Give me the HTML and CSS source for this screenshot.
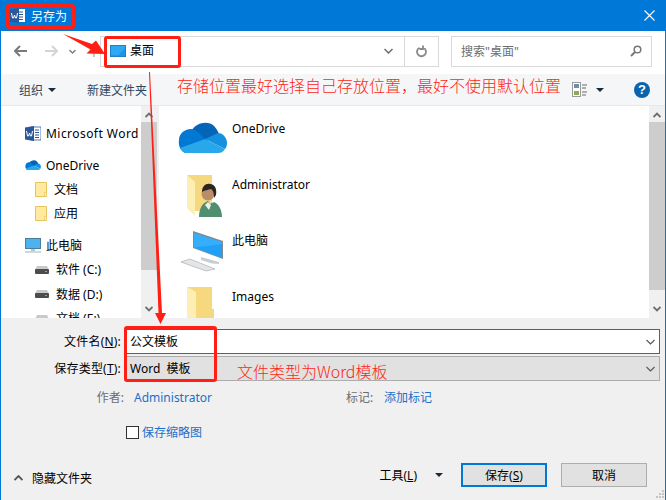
FILE: index.html
```html
<!DOCTYPE html>
<html lang="zh-CN">
<head>
    <meta charset="UTF-8">
    <title>另存为</title>
    <link rel="stylesheet" href="styles.css">
</head>
<body>
<div class="window">
    <div class="titlebar">
        <svg class="title-icon" width="16" height="15" viewBox="0 0 16 15">
            <rect x="6" y="1" width="9" height="13" fill="#fff"/>
            <path d="M9 4h4M9 6.500h4M9 9h4M9 11.500h4" stroke="#2b579a" stroke-width="1"/>
            <path d="M0 1.500 9 0v15l-9-1.500z" fill="#2b579a"/>
            <path d="M1.500 5l1 5h1l1-3 1 3h1l1-5" fill="none" stroke="#fff" stroke-width="1"/>
        </svg>
        <span class="title-text">另存为</span>
        <svg class="title-close" width="11" height="11" viewBox="0 0 11 11"><path d="M.5.500l10 10M10.500.500l-10 10" stroke="#fff" stroke-width="1.100"/></svg>
    </div>

    <div class="navbar">
        <svg class="nav-btn" width="14" height="12" viewBox="0 0 14 12"><path d="M6 1 1 6l5 5M1 6h12" fill="none" stroke="#7a7a7a" stroke-width="2"/></svg>
        <svg class="nav-btn nav-forward" width="14" height="12" viewBox="0 0 14 12"><path d="M8 1l5 5-5 5M13 6H1" fill="none" stroke="#d4d4d4" stroke-width="2"/></svg>
        <svg class="nav-btn nav-down" width="7" height="5" viewBox="0 0 7 5"><path d="M.5 1l3 3 3-3" fill="none" stroke="#7a7a7a" stroke-width="1.300"/></svg>
        <svg class="nav-btn nav-up" width="10" height="12" viewBox="0 0 10 12"><path d="M1 5l4-4 4 4M5 1v11" fill="none" stroke="#c4c4c4" stroke-width="2"/></svg>
        <div class="address">
            <svg class="address-icon" width="16" height="12" viewBox="0 0 16 12">
                <rect width="16" height="12" fill="#1f7fc4"/>
                <rect x="1" y="1" width="14" height="9.500" fill="#2ea7f5"/>
                <path d="M8 10.500 15 3v7.500z" fill="#1a95ea"/>
            </svg>
            <span class="address-text">桌面</span>
            <svg class="address-chevron" width="9" height="6" viewBox="0 0 9 6"><path d="M.5 1 4.500 5l4-4" fill="none" stroke="#6d6d6d" stroke-width="1.500"/></svg>
            <div class="address-refresh">
                <svg width="12" height="13" viewBox="0 0 12 13"><path d="M7 2.500a4.500 4.500 0 1 1-3.500.2M7 .500v3.500H3.500" fill="none" stroke="#8a8a8a" stroke-width="1.800"/></svg>
            </div>
        </div>
        <div class="search">
            <span>搜索"桌面"</span>
            <svg width="12" height="12" viewBox="0 0 12 12"><circle cx="7.500" cy="4.500" r="3.300" fill="none" stroke="#777" stroke-width="1.500"/><path d="M5 7 1 11" stroke="#777" stroke-width="2"/></svg>
        </div>
    </div>

    <div class="toolbar">
        <span class="tool-item">组织</span>
        <span class="caret tool-caret"></span>
        <span class="tool-item tool-new">新建文件夹</span>
        <svg class="view-icon" width="15" height="15" viewBox="0 0 15 15">
            <rect x=".5" y=".5" width="8" height="14" fill="#fff" stroke="#9a9a9a"/>
            <rect x="2" y="2" width="5" height="4" fill="#6f8fa8"/>
            <rect x="2" y="9" width="5" height="4" fill="#8fa85a"/>
            <path d="M10 3h5M10 6h4M10 10h5M10 13h4" stroke="#666"/>
        </svg>
        <span class="caret view-caret"></span>
        <span class="help">?</span>
    </div>

    <div class="browser">
        <div class="tree">
            <div class="tree-row">
                <svg width="16" height="15" viewBox="0 0 16 15">
                    <rect x="6" y="1" width="10" height="13" fill="#fff" stroke="#2b579a" stroke-width=".8"/>
                    <path d="M10 4h4M10 6.500h4M10 9h4M10 11.500h4" stroke="#2b579a"/>
                    <path d="M0 1.500 9 0v15l-9-1.500z" fill="#2b579a"/>
                    <path d="M1.500 5l1 5h1l1-3 1 3h1l1-5" fill="none" stroke="#fff"/>
                </svg>
                <span class="tree-word">Microsoft Word</span>
            </div>
            <div class="tree-group">
                <div class="tree-row">
                    <svg width="16" height="10" viewBox="0 0 49 31">
                        <path d="M14 8C18 1 30-2 36 4c2 2 4 5 5 8L27 20 13 10z" fill="#0364b8"/>
                        <path d="M1 18C1 12 6 7 13 7c3 0 6 2 8 4l6 6L8 31C3 30 0 24 1 18z" fill="#0078d4"/>
                        <path d="M40 11c5 0 9 5 9 10 0 3-1 5-2 6L27 17z" fill="#1490df"/>
                        <path d="M27 17l20 10c-2 3-4 4-7 4H9c-3 0-5-2-7-5z" fill="#28a8ea"/>
                    </svg>
                    <span>OneDrive</span>
                </div>
                <div class="tree-row tree-sub">
                    <svg width="12" height="15" viewBox="0 0 12 15"><path d="M.5.500h11v14H.5z" fill="#ffeaa0" stroke="#e6c35c"/><path d="M9.500 10.500h2v4h-2z" fill="#fff3c4" stroke="#e6c35c" stroke-width=".7"/></svg>
                    <span>文档</span>
                </div>
                <div class="tree-row tree-sub">
                    <svg width="12" height="15" viewBox="0 0 12 15"><path d="M.5.500h11v14H.5z" fill="#ffeaa0" stroke="#e6c35c"/><path d="M9.500 10.500h2v4h-2z" fill="#fff3c4" stroke="#e6c35c" stroke-width=".7"/></svg>
                    <span>应用</span>
                </div>
            </div>
            <div class="tree-group">
                <div class="tree-row">
                    <svg width="16" height="15" viewBox="0 0 16 15">
                        <rect x=".5" y=".5" width="15" height="10" fill="#4db2ee" stroke="#4a7d9e"/>
                        <path d="M6 11h4v2H6z" fill="#b5c7d3"/>
                        <path d="M0 14h16" stroke="#b9ccd8" stroke-width="1.500"/>
                    </svg>
                    <span>此电脑</span>
                </div>
                <div class="tree-row tree-sub tree-drive">
                    <svg width="14" height="9" viewBox="0 0 14 9"><path d="M2 1h10l2 4H0z" fill="#c9c9c9"/><rect y="4" width="14" height="5" rx="1" fill="#4d4d4d"/><rect x="10" y="6" width="2" height="1" fill="#4fd34f"/></svg>
                    <span>软件 (C:)</span>
                </div>
                <div class="tree-row tree-sub tree-drive">
                    <svg width="14" height="9" viewBox="0 0 14 9"><path d="M2 1h10l2 4H0z" fill="#c9c9c9"/><rect y="4" width="14" height="5" rx="1" fill="#4d4d4d"/><rect x="10" y="6" width="2" height="1" fill="#4fd34f"/></svg>
                    <span>数据 (D:)</span>
                </div>
                <div class="tree-row tree-sub tree-drive">
                    <svg width="14" height="9" viewBox="0 0 14 9"><path d="M2 1h10l2 4H0z" fill="#c9c9c9"/><rect y="4" width="14" height="5" rx="1" fill="#4d4d4d"/><rect x="10" y="6" width="2" height="1" fill="#4fd34f"/></svg>
                    <span>文档 (E:)</span>
                </div>
            </div>
        </div>
        <div class="scrollbar tree-scroll">
            <svg width="8" height="6" viewBox="0 0 8 6"><path d="M.5 5 4 1.500 7.500 5" fill="none" stroke="#6d6d6d" stroke-width="1.800"/></svg>
            <div class="thumb"></div>
            <svg width="8" height="6" viewBox="0 0 8 6"><path d="M.5 1 4 4.500 7.500 1" fill="none" stroke="#6d6d6d" stroke-width="1.800"/></svg>
        </div>
        <div class="files">
            <div class="file-row">
                <svg class="file-icon file-cloud" width="49" height="31" viewBox="0 0 49 31">
                    <path d="M14 8C18 1 30-2 36 4c2 2 4 5 5 8L27 20 13 10z" fill="#0364b8"/>
                    <path d="M1 18C1 12 6 7 13 7c3 0 6 2 8 4l6 6L8 31C3 30 0 24 1 18z" fill="#0078d4"/>
                    <path d="M40 11c5 0 9 5 9 10 0 3-1 5-2 6L27 17z" fill="#1490df"/>
                    <path d="M27 17l20 10c-2 3-4 4-7 4H9c-3 0-5-2-7-5z" fill="#28a8ea"/>
                </svg>
                <span>OneDrive</span>
            </div>
            <div class="file-row">
                <svg class="file-icon" width="48" height="42" viewBox="0 0 48 42">
                    <path d="M8 0h25v36H16z" fill="#f6d87e"/>
                    <path d="M8 0l8 7v34l-8-8z" fill="#fdeeb3"/>
                    <path d="M20 42c0-8 3-14 9-16l2 3 4-2c5 2 8 8 8 15z" fill="#4f8f70"/>
                    <path d="M26 30l3-3 3 3-2 5z" fill="#eee"/>
                    <circle cx="29" cy="19" r="6.500" fill="#b98d68"/>
                    <path d="M23 17c0-6 4-9 8-8 5 0 7 5 6 11l-2 3c0-5-1-8-3-9-3 1-6 1-9 3z" fill="#2c2620"/>
                </svg>
                <span>Administrator</span>
            </div>
            <div class="file-row">
                <svg class="file-icon" width="48" height="42" viewBox="0 0 48 42">
                    <path d="M14 0 44 10V28L14 17z" fill="#7d8a94"/>
                    <path d="M15 2 43 11V27L15 16.500z" fill="#35aefc"/>
                    <path d="M15 16.500 43 13V27z" fill="#22a0f5"/>
                    <path d="M22 26 40 31v2l-7-.5L22 29z" fill="#c5ced4"/>
                    <path d="M2 31 11 28 36 38 27 40z" fill="#e3e6e8" stroke="#b5babd" stroke-width=".8"/>
                </svg>
                <span>此电脑</span>
            </div>
            <div class="file-row">
                <svg class="file-icon" width="48" height="42" viewBox="0 0 48 42">
                    <path d="M8 0h25v22h2v20H8z" fill="#f6d87e"/>
                    <path d="M8 0l9 5v37l-9-5z" fill="#fdeeb3"/>
                </svg>
                <span>Images</span>
            </div>
        </div>
        <div class="scrollbar files-scroll">
            <svg width="8" height="6" viewBox="0 0 8 6"><path d="M.5 5 4 1.500 7.500 5" fill="none" stroke="#6d6d6d" stroke-width="1.800"/></svg>
            <div class="thumb"></div>
            <svg width="8" height="6" viewBox="0 0 8 6"><path d="M.5 1 4 4.500 7.500 1" fill="none" stroke="#6d6d6d" stroke-width="1.800"/></svg>
        </div>
    </div>

    <div class="panel">
        <div class="field">
            <label class="field-label">文件名(<u>N</u>):</label>
            <div class="combo combo-name">
                <span>公文模板</span>
                <svg width="9" height="6" viewBox="0 0 9 6"><path d="M.5 1 4.500 5l4-4" fill="none" stroke="#555" stroke-width="1.100"/></svg>
            </div>
        </div>
        <div class="field">
            <label class="field-label">保存类型(<u>T</u>):</label>
            <div class="combo combo-type">
                <span>Word 模板</span>
                <svg width="9" height="6" viewBox="0 0 9 6"><path d="M.5 1 4.500 5l4-4" fill="none" stroke="#555" stroke-width="1.100"/></svg>
            </div>
        </div>
        <div class="meta">
            <span class="meta-label">作者:</span>
            <span class="meta-link meta-author">Administrator</span>
            <span class="meta-name">标记:</span>
            <span class="meta-link">添加标记</span>
        </div>
        <div class="thumb-option">
            <span class="checkbox"></span>
            <span class="meta-link">保存缩略图</span>
        </div>
        <div class="footer">
            <svg class="hide-icon" width="9" height="6" viewBox="0 0 9 6"><path d="M.5 5 4.500 1l4 4" fill="none" stroke="#555" stroke-width="1.800"/></svg>
            <span class="hide-text">隐藏文件夹</span>
            <span class="tools">工具(<u>L</u>)</span>
            <span class="caret tools-caret"></span>
            <button class="btn btn-save">保存(<u>S</u>)</button>
            <button class="btn">取消</button>
        </div>
    </div>

    <!-- 截图上的红色标注 -->
    <svg class="arrows" width="666" height="500" viewBox="0 0 666 500">
        <path d="M63 34 92 44 96 40.500 105 54 86.500 53.500 90.500 49.500z" fill="#ff1f14"/>
        <path d="M149 72h1L162 313h4l-5.500 11L155 313h3.500z" fill="#ff1f14"/>
    </svg>
    <div class="mark mark-title"></div>
    <div class="mark mark-address"></div>
    <div class="mark mark-fields"></div>
    <div class="note note-location">存储位置最好选择自己存放位置&#xFF0C;最好不使用默认位置</div>
    <div class="note note-type">文件类型为Word模板</div>

    <svg class="grip" width="9" height="9" viewBox="0 0 9 9">
        <path d="M6 0h2v2H6zM3 3h2v2H3zM6 3h2v2H6zM0 6h2v2H0zM3 6h2v2H3zM6 6h2v2H6z" fill="#c4c4c4"/>
    </svg>
</div>
</body>
</html>
```

FILE: styles.css
```css
body {
    margin: 0;
    font-family: "Noto Sans", "Noto Sans CJK SC", sans-serif;
    font-size: 12px;
    color: #000;
}

.window {
    position: relative;
    width: 666px;
    height: 500px;
    box-sizing: border-box;
    display: flex;
    flex-direction: column;
    overflow: hidden;
    border-left: 1px solid #0078d7;
    border-right: 1px solid #0078d7;
    background-color: #f0f0f0;
}

/* 标题栏 */
.titlebar {
    height: 31px;
    flex-shrink: 0;
    display: flex;
    align-items: center;
    padding: 0 9px;
    background-color: #0078d7;
    color: #fff;
}

.title-icon {
    margin-right: 5px;
}

.title-close {
    margin-left: auto;
    margin-right: 1px;
}

/* 地址栏 */
.navbar {
    height: 43px;
    flex-shrink: 0;
    box-sizing: border-box;
    display: flex;
    align-items: center;
    padding-left: 13px;
    padding-right: 13px;
    padding-bottom: 3px;
    background-color: #fff;
}

.nav-forward {
    margin-left: 16px;
}

.nav-down {
    margin-left: 11px;
}

.nav-up {
    margin-left: 13px;
}

.address {
    width: 339px;
    height: 31px;
    box-sizing: border-box;
    margin-left: 1px;
    display: flex;
    align-items: center;
    padding-left: 9px;
    border: 1px solid #d9d9d9;
    color: #000;
}

.address-icon {
    margin-right: 4px;
}

.address-text {
    margin-top: -2px;
}

.address-chevron {
    margin-left: auto;
    margin-right: 11px;
}

.address-refresh {
    width: 33px;
    height: 100%;
    display: flex;
    align-items: center;
    justify-content: center;
    border-left: 1px solid #d9d9d9;
}

.search {
    width: 201px;
    height: 31px;
    box-sizing: border-box;
    margin-left: 12px;
    display: flex;
    align-items: center;
    justify-content: space-between;
    padding: 0 9px;
    border: 1px solid #d9d9d9;
    color: #6d6d6d;
}

/* 工具栏 */
.toolbar {
    height: 32px;
    flex-shrink: 0;
    box-sizing: border-box;
    display: flex;
    align-items: center;
    padding-left: 18px;
    border-bottom: 1px solid #e8e8e8;
    background-color: #f5f6f7;
    color: #33475b;
}

.caret {
    width: 0;
    height: 0;
    border-left: 4px solid transparent;
    border-right: 4px solid transparent;
    border-top: 4px solid #1c2b3a;
}

.tool-caret {
    margin-left: 5px;
}

.tool-new {
    margin-left: 31px;
}

.view-icon {
    margin-left: 425px;
}

.view-caret {
    margin-left: 9px;
}

.help {
    width: 16px;
    height: 16px;
    margin-left: 30px;
    border-radius: 50%;
    background-color: #0d62ae;
    color: #fff;
    font-family: "Liberation Sans", sans-serif;
    font-size: 13px;
    font-weight: bold;
    line-height: 16px;
    text-align: center;
}

/* 文件浏览区 */
.browser {
    height: 212px;
    flex-shrink: 0;
    display: flex;
    background-color: #f0f0f0;
}

.tree {
    width: 140px;
    flex-shrink: 0;
    box-sizing: border-box;
    padding-top: 15px;
    overflow: hidden;
    background-color: #fff;
}

.tree-group {
    margin-top: 8px;
}

.tree-row {
    height: 24px;
    display: flex;
    align-items: center;
    gap: 5px;
    padding-left: 24px;
    white-space: nowrap;
}

.tree-word {
    letter-spacing: .45px;
}

.tree-sub {
    padding-left: 34px;
    gap: 7px;
}

.tree-drive {
    height: 24.500px;
}

.scrollbar {
    width: 16px;
    flex-shrink: 0;
    display: flex;
    flex-direction: column;
    align-items: center;
    justify-content: space-between;
    padding: 6px 0;
    box-sizing: border-box;
    background-color: #f0f0f0;
}

.thumb {
    width: 16px;
    background-color: #cdcdcd;
}

.tree-scroll .thumb {
    height: 148px;
    margin-bottom: 32px;
}

.files-scroll .thumb {
    height: 168px;
    margin-bottom: 12px;
}

.files {
    flex: 1;
    margin-left: 2px;
    padding-top: 7px;
    overflow: hidden;
    background-color: #fff;
}

.file-row {
    height: 56px;
    display: flex;
    align-items: flex-start;
    padding-left: 20px;
    color: #000;
}

.file-row span {
    margin-left: 5px;
    line-height: 32px;
}

.file-icon {
    margin-top: 6px;
}

.file-cloud {
    margin-top: 9px;
    margin-left: -1px;
}

/* 底部表单 */
.panel {
    flex: 1;
    display: flex;
    flex-direction: column;
    padding-top: 11px;
    background-color: #f0f0f0;
}

.field {
    display: flex;
    align-items: center;
    height: 25px;
    margin-bottom: 2px;
}

.field-label {
    width: 120px;
    margin-right: 5px;
    margin-top: -2px;
    text-align: right;
    letter-spacing: .2px;
}

.combo {
    width: 534px;
    height: 25px;
    box-sizing: border-box;
    display: flex;
    align-items: center;
    justify-content: space-between;
    padding: 0 4px 0 3px;
    color: #000;
    word-spacing: 3px;
}

.combo span {
    margin-top: -2px;
}

.combo-name {
    border: 1px solid #0078d7;
    background-color: #fff;
}

.combo-type {
    border: 1px solid #adadad;
    background-color: #e1e1e1;
}

.meta {
    display: flex;
    align-items: center;
    height: 20px;
    margin-top: 4px;
}

.meta-label {
    width: 123px;
    text-align: right;
    color: #6d6d6d;
}

.meta-name {
    width: 38px;
    color: #6d6d6d;
}

.meta-link {
    color: #1c6fc9;
}

.meta-author {
    width: 212px;
    margin-left: 10px;
}

.thumb-option {
    display: flex;
    align-items: center;
    gap: 3px;
    margin-top: 16px;
    padding-left: 125px;
}

.checkbox {
    width: 13px;
    height: 13px;
    box-sizing: border-box;
    border: 1px solid #333;
    background-color: #fff;
}

.footer {
    display: flex;
    align-items: center;
    height: 24px;
    margin-top: auto;
    margin-bottom: 13px;
    padding-left: 13px;
    color: #000;
}

.hide-icon {
    margin-top: 5px;
    margin-right: 9px;
}

.hide-text {
    margin-top: 5px;
}

.tools {
    margin-left: auto;
}

.tools-caret {
    margin-left: 18px;
    margin-right: 18px;
}

.btn {
    width: 86px;
    height: 24px;
    margin: 0 18px 0 0;
    padding: 0;
    border: 1px solid #adadad;
    background-color: #e1e1e1;
    color: #000;
    font-family: "Noto Sans", "Noto Sans CJK SC", sans-serif;
    font-size: 12px;
}

.btn-save {
    margin-right: 14px;
    border: 2px solid #0078d7;
}

/* 红色标注 */
.arrows {
    position: absolute;
    left: -1px;
    top: 0;
    pointer-events: none;
}

.mark {
    position: absolute;
    box-sizing: border-box;
    border: 3px solid #ff1f14;
    border-radius: 3px;
}

.mark-title {
    left: 5px;
    top: 4px;
    width: 69px;
    height: 25px;
}

.mark-address {
    left: 103px;
    top: 36px;
    width: 77px;
    height: 32px;
}

.mark-fields {
    left: 123px;
    top: 326px;
    width: 93px;
    height: 56px;
}

.note {
    position: absolute;
    color: #ff1f14;
    font-family: "Noto Sans CJK SC", sans-serif;
    font-size: 16px;
    font-weight: 300;
    line-height: 20px;
    white-space: nowrap;
}

.note-location {
    left: 176px;
    top: 75px;
}

.note-type {
    left: 236px;
    top: 361px;
}

.grip {
    position: absolute;
    right: 0;
    bottom: 1px;
}
```
